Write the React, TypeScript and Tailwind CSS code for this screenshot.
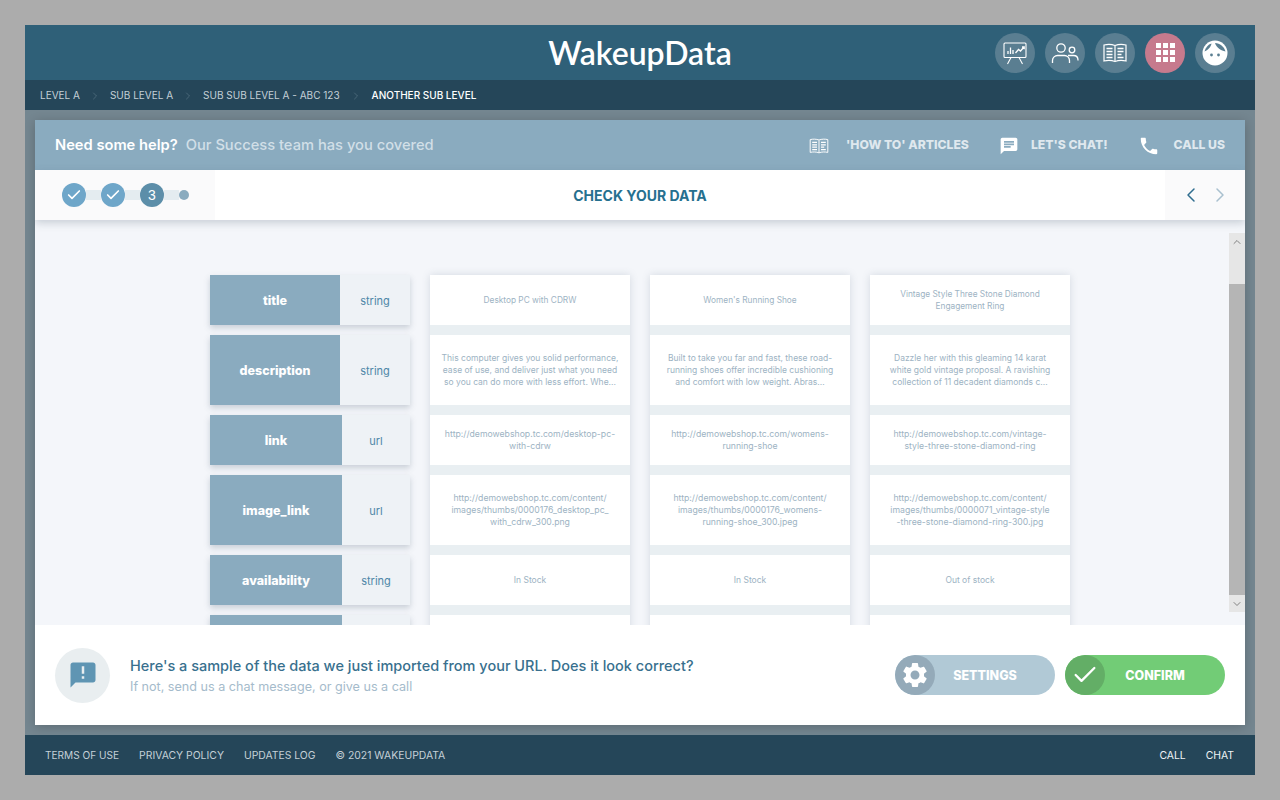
import React from "react";
import { ChevronLeft, ChevronRight, ChevronUp, ChevronDown, Check } from "lucide-react";

const crumbs: string[] = ["LEVEL A", "SUB LEVEL A", "SUB SUB LEVEL A - ABC 123"];

const rows = [
  { key: "title", type: "string", h: "h-[50px]", kw: "w-[130px]", ts: "text-[8.300px]", vals: ["Desktop PC with CDRW", "Women's Running Shoe", "Vintage Style Three Stone Diamond\nEngagement Ring"] },
  {
    key: "description",
    type: "string",
    h: "h-[70px]",
    kw: "w-[130px]",
    ts: "text-[8.500px]",
    vals: [
      "This computer gives you solid performance,\nease of use, and deliver just what you need\nso you can do more with less effort. Whe...",
      "Built to take you far and fast, these road-\nrunning shoes offer incredible cushioning\nand comfort with low weight. Abras...",
      "Dazzle her with this gleaming 14 karat\nwhite gold vintage proposal. A ravishing\ncollection of 11 decadent diamonds c...",
    ],
  },
  {
    key: "link",
    type: "url",
    h: "h-[50px]",
    kw: "w-[132px]",
    ts: "text-[8.700px]",
    vals: [
      "http://demowebshop.tc.com/desktop-pc-\nwith-cdrw",
      "http://demowebshop.tc.com/womens-\nrunning-shoe",
      "http://demowebshop.tc.com/vintage-\nstyle-three-stone-diamond-ring",
    ],
  },
  {
    key: "image_link",
    type: "url",
    h: "h-[70px]",
    kw: "w-[132px]",
    ts: "text-[8.700px]",
    vals: [
      "http://demowebshop.tc.com/content/\nimages/thumbs/0000176_desktop_pc_\nwith_cdrw_300.png",
      "http://demowebshop.tc.com/content/\nimages/thumbs/0000176_womens-\nrunning-shoe_300.jpeg",
      "http://demowebshop.tc.com/content/\nimages/thumbs/0000071_vintage-style\n-three-stone-diamond-ring-300.jpg",
    ],
  },
  { key: "availability", type: "string", h: "h-[50px]", kw: "w-[132px]", ts: "text-[8.500px]", vals: ["In Stock", "In Stock", "Out of stock"] },
  { key: "", type: "", h: "h-[50px]", kw: "w-[132px]", ts: "text-[8.500px]", vals: ["", "", ""] },
];

function BookIcon({ className }: { className: string }) {
  return (
    <svg viewBox="0 0 24 20" fill="none" stroke="currentColor" strokeWidth="1.2" className={className}>
      <path d="M1 2c3.500-.8 7.500-.8 11 .5 3.500-1.300 7.500-1.300 11-.5v16c-3.500-.8-7.500-.8-11 .5-3.500-1.300-7.500-1.300-11-.5z" />
      <path d="M12 3v15" />
      <path d="M3.500 5.500h6M3.500 8.500h6M3.500 11.500h6M3.500 14.500h6M14.500 5.500h6M14.500 8.500h6M14.500 11.500h4M14.500 14.500h6" strokeWidth="1.600" />
    </svg>
  );
}

function HeaderIcons() {
  return (
    <div className="flex items-center gap-[10px]">
      <button className="flex h-10 w-10 items-center justify-center rounded-full bg-[#5a7e91] text-white">
        <svg viewBox="0 0 26 24" fill="none" stroke="currentColor" strokeWidth="1.100" className="h-[26px] w-[26px]">
          <rect x="2" y="2" width="22" height="14.500" rx="1" />
          <path d="M9 16.500 5.500 23M17 16.500 20.500 23" />
          <path d="M6 13v-3M8.500 13V6.500M11 13V9" strokeWidth="1.300" />
          <path d="M13.500 12l3-3.500 2 1.500 3.500-4M20 6h2.200v2.200" strokeWidth="1.300" />
        </svg>
      </button>
      <button className="flex h-10 w-10 items-center justify-center rounded-full bg-[#5a7e91] text-white">
        <svg viewBox="0 0 28 24" fill="none" stroke="currentColor" strokeWidth="1.300" className="h-[26px] w-[28px]">
          <circle cx="10" cy="7" r="4.200" />
          <circle cx="21" cy="9" r="2.800" />
          <path d="M1.500 22v-2.500c0-3 2.500-5 5-5h7c2.500 0 5 2 5 5V22" />
          <path d="M17 14.500h5.500c2.500 0 4.500 1.500 4.500 4.500v.5" />
        </svg>
      </button>
      <button className="flex h-10 w-10 items-center justify-center rounded-full bg-[#5a7e91] text-white">
        <BookIcon className="h-[20px] w-[24px]" />
      </button>
      <button className="flex h-10 w-10 items-center justify-center rounded-full bg-[#c67a8d]">
        <div className="grid grid-cols-3 gap-[2px]">
          {Array.from({ length: 9 }).map((_, i) => (
            <div key={i} className="h-[5px] w-[5px] bg-white" />
          ))}
        </div>
      </button>
      <button className="flex h-10 w-10 items-center justify-center rounded-full bg-[#5a7e91]">
        <svg viewBox="0 0 26 26" className="h-[26px] w-[26px]">
          <circle cx="13" cy="13" r="12.500" fill="#fff" />
          <path d="M2.500 11.500C3.500 7.500 6 4.500 9.500 3.500 9 6.500 6.500 10 2.500 11.500z" fill="#5a7e91" />
          <path d="M13 3c5 .2 9 3.500 10.500 8.500C19 10.500 14.500 8 13 3z" fill="#5a7e91" />
          <circle cx="9.500" cy="15" r="1.400" fill="#5a7e91" />
          <circle cx="16.500" cy="15" r="1.400" fill="#5a7e91" />
        </svg>
      </button>
    </div>
  );
}

function Stepper() {
  return (
    <div className="flex w-[180px] items-center bg-[#fafafb] pl-[27px]">
      <div className="flex h-6 w-6 items-center justify-center rounded-full bg-[#6ea6c9] text-white">
        <Check size={16} strokeWidth={2.5} />
      </div>
      <div className="h-[10px] w-[15px] bg-[#e4ecf0]" />
      <div className="flex h-6 w-6 items-center justify-center rounded-full bg-[#6ea6c9] text-white">
        <Check size={16} strokeWidth={2.5} />
      </div>
      <div className="h-[10px] w-[15px] bg-[#e4ecf0]" />
      <div className="flex h-6 w-6 items-center justify-center rounded-full bg-[#5c8ea9] font-['Liberation_Sans',sans-serif] text-[14px] text-white">3</div>
      <div className="h-[10px] w-[15px] bg-[#e4ecf0]" />
      <div className="h-[10px] w-[10px] rounded-full bg-[#8aabbf]" />
    </div>
  );
}

function DataTable() {
  return (
    <div className="flex justify-center gap-5 pt-[55px]">
      <div className="flex w-[200px] flex-col gap-[10px]">
        {rows.map((row, i) => (
          <div key={i} className={`flex shrink-0 ${row.h} bg-[#eef2f6] shadow-[0_3px_6px_rgba(70,90,110,0.25)]`}>
            <div className={`flex items-center justify-center bg-[#8aabbf] pt-[2px] text-[12.500px] font-extrabold text-white ${row.kw}`}>{row.key}</div>
            <div className="flex flex-1 items-center justify-center pt-[2px] text-[11px] text-[#4f87a8]">{row.type}</div>
          </div>
        ))}
      </div>
      {[0, 1, 2].map((c) => (
        <div key={c} className="flex w-[200px] flex-col gap-[10px] bg-[#e9eff2] shadow-[0_0_8px_rgba(70,90,110,0.18)]">
          {rows.map((row, i) => (
            <div key={i} className={`flex shrink-0 ${row.h} ${row.ts} items-center justify-center whitespace-pre-line bg-white px-1 text-center leading-[12px] text-[#9db3c3]`}>
              {row.vals[c]}
            </div>
          ))}
        </div>
      ))}
    </div>
  );
}

export default function App() {
  return (
    <div className="h-[800px] w-[1280px] overflow-hidden bg-[#acacac] p-[25px] font-['Inter',sans-serif]">
      <div className="flex h-[750px] w-[1230px] flex-col bg-[#748690]">
        <header className="relative flex h-[55px] shrink-0 items-center justify-end bg-[#2f6078] pr-5">
          <div className="absolute left-0 right-0 text-center font-['Lato',sans-serif] text-[32px] font-semibold leading-[55px] text-white">WakeupData</div>
          <div className="relative">
            <HeaderIcons />
          </div>
        </header>

        <nav className="flex h-[30px] shrink-0 items-center bg-[#254659] pl-[15px] pt-px text-[10px] text-[#c4d0d7]">
          {crumbs.map((c, i) => (
            <React.Fragment key={c}>
              <span>{c}</span>
              <ChevronRight size={12} strokeWidth={1} className={i === 2 ? "mx-[10px] text-[#6d8696]" : "mx-[9px] text-[#6d8696]"} />
            </React.Fragment>
          ))}
          <span className="font-medium text-white">ANOTHER SUB LEVEL</span>
        </nav>

        <main className="mx-[10px] mt-[10px] flex h-[605px] flex-col overflow-hidden shadow-[0_2px_10px_rgba(0,0,0,0.2)]">
          <div className="flex h-[50px] shrink-0 items-center justify-between bg-[#8aabbf] px-5">
            <div className="flex gap-[8px] text-[14.700px]">
              <span className="font-semibold text-white">Need some help?</span>
              <span className="font-medium text-[#d1dfe7]">Our Success team has you covered</span>
            </div>
            <div className="flex items-center pt-[1px] text-[12.200px] font-extrabold text-[#dfe8ee]">
              <BookIcon className="mr-[17px] h-[16px] w-[20px] text-white" />
              <span>'HOW TO' ARTICLES</span>
              <svg viewBox="0 0 24 24" fill="currentColor" className="ml-[30px] mr-[12px] h-[20px] w-[20px] text-white">
                <path d="M20 2H4c-1.100 0-2 .9-2 2v18l4-4h14c1.100 0 2-.9 2-2V4c0-1.100-.9-2-2-2zM6 9h12v2H6V9zm8 5H6v-2h8v2zm4-6H6V6h12v2z" />
              </svg>
              <span>LET'S CHAT!</span>
              <svg viewBox="0 0 24 24" fill="currentColor" className="ml-[30px] mr-[14px] h-[22px] w-[22px] text-white">
                <path d="M6.620 10.790c1.440 2.830 3.760 5.140 6.590 6.590l2.200-2.200c.27-.27.67-.36 1.020-.24 1.120.37 2.330.57 3.570.57.55 0 1 .45 1 1V20c0 .55-.45 1-1 1-9.390 0-17-7.610-17-17 0-.55.45-1 1-1h3.500c.55 0 1 .45 1 1 0 1.250.2 2.450.57 3.570.11.35.03.74-.25 1.020l-2.200 2.200z" />
              </svg>
              <span>CALL US</span>
            </div>
          </div>

          <div className="relative z-10 flex h-[50px] shrink-0 bg-white shadow-[0_3px_8px_rgba(70,90,110,0.25)]">
            <Stepper />
            <div className="flex flex-1 items-center justify-center pr-[100px] pt-[1px] text-[14px] font-bold text-[#26708f]">CHECK YOUR DATA</div>
            <div className="flex w-[80px] items-center justify-center gap-[5px] bg-[#fafafb]">
              <ChevronLeft size={24} strokeWidth={1.500} className="text-[#2f6d8f]" />
              <ChevronRight size={24} strokeWidth={1.500} className="text-[#a9c0cf]" />
            </div>
          </div>

          <div className="relative h-[405px] shrink-0 overflow-hidden bg-[#f4f6fa]">
            <DataTable />
            <div className="absolute right-0 top-[13px] flex h-[379px] w-4 flex-col bg-[#e6e6e6]">
              <div className="flex h-[17px] items-center justify-center text-[#606060]">
                <ChevronUp size={12} strokeWidth={1.500} />
              </div>
              <div className="mt-[34px] h-[311px] bg-[#b5b5b5]" />
              <div className="flex h-[17px] items-center justify-center text-[#606060]">
                <ChevronDown size={12} strokeWidth={1.500} />
              </div>
            </div>
          </div>

          <div className="flex h-[100px] shrink-0 items-center bg-white px-5">
            <div className="flex h-[55px] w-[55px] items-center justify-center rounded-full bg-[#e9eef0]">
              <svg viewBox="0 0 24 24" fill="#5f95b3" className="h-[30px] w-[30px]">
                <path d="M20 2H4c-1.100 0-1.990.9-1.990 2L2 22l4-4h14c1.100 0 2-.9 2-2V4c0-1.100-.9-2-2-2zm-7 9h-2V5h2v6zm0 4h-2v-2h2v2z" />
              </svg>
            </div>
            <div className="ml-5 flex-1">
              <div className="text-[14.500px] font-medium leading-[21px] text-[#38708e]">Here's a sample of the data we just imported from your URL. Does it look correct?</div>
              <div className="mt-[2px] text-[12.600px] leading-[18px] text-[#a5bbcb]">If not, send us a chat message, or give us a call</div>
            </div>
            <div className="flex gap-[10px] text-[12.500px] font-extrabold text-white">
              <button className="flex h-10 w-[160px] items-center overflow-hidden rounded-full bg-[#b1c9d6]">
                <span className="flex h-10 w-10 items-center justify-center rounded-full bg-[#94aab9]">
                  <svg viewBox="0 0 24 24" fill="#fff" className="h-[30px] w-[30px]">
                    <path d="M19.140 12.940c.04-.3.06-.61.06-.94 0-.32-.02-.64-.07-.94l2.030-1.580c.18-.14.23-.41.12-.61l-1.920-3.320c-.12-.22-.37-.29-.59-.22l-2.390.96c-.5-.38-1.030-.7-1.620-.94l-.36-2.540c-.04-.24-.24-.41-.48-.41h-3.840c-.24 0-.43.17-.47.41l-.36 2.540c-.59.24-1.130.57-1.620.94l-2.390-.96c-.22-.08-.47 0-.59.22L2.740 8.870c-.12.21-.08.47.12.61l2.030 1.580c-.05.3-.09.63-.09.94s.02.64.07.94l-2.030 1.580c-.18.14-.23.41-.12.61l1.920 3.320c.12.22.37.29.59.22l2.390-.96c.5.38 1.030.7 1.620.94l.36 2.540c.05.24.24.41.48.41h3.840c.24 0 .44-.17.47-.41l.36-2.540c.59-.24 1.130-.56 1.620-.94l2.390.96c.22.08.47 0 .59-.22l1.920-3.320c.12-.22.07-.47-.12-.61l-2.010-1.580zM12 15.600c-1.980 0-3.600-1.620-3.600-3.600s1.620-3.600 3.600-3.600 3.600 1.620 3.600 3.600-1.620 3.600-3.600 3.600z" />
                  </svg>
                </span>
                <span className="flex-1 pr-[20px] pt-[2px] text-center">SETTINGS</span>
              </button>
              <button className="flex h-10 w-[160px] items-center overflow-hidden rounded-full bg-[#72cc76]">
                <span className="flex h-10 w-10 items-center justify-center rounded-full bg-[#63ae66]">
                  <Check size={28} strokeWidth={2} />
                </span>
                <span className="flex-1 pr-[20px] pt-[2px] text-center">CONFIRM</span>
              </button>
            </div>
          </div>
        </main>

        <footer className="mt-[10px] flex h-10 shrink-0 items-center justify-between bg-[#254659] pl-5 pr-[21px] pt-[2px] text-[10.400px] text-[#c4d0d7]">
          <div className="flex gap-5">
            <span className="text-[10.100px]">TERMS OF USE</span>
            <span>PRIVACY POLICY</span>
            <span>UPDATES LOG</span>
            <span>© 2021 WAKEUPDATA</span>
          </div>
          <div className="flex gap-5 text-[#eef3f5]">
            <span>CALL</span>
            <span>CHAT</span>
          </div>
        </footer>
      </div>
    </div>
  );
}
